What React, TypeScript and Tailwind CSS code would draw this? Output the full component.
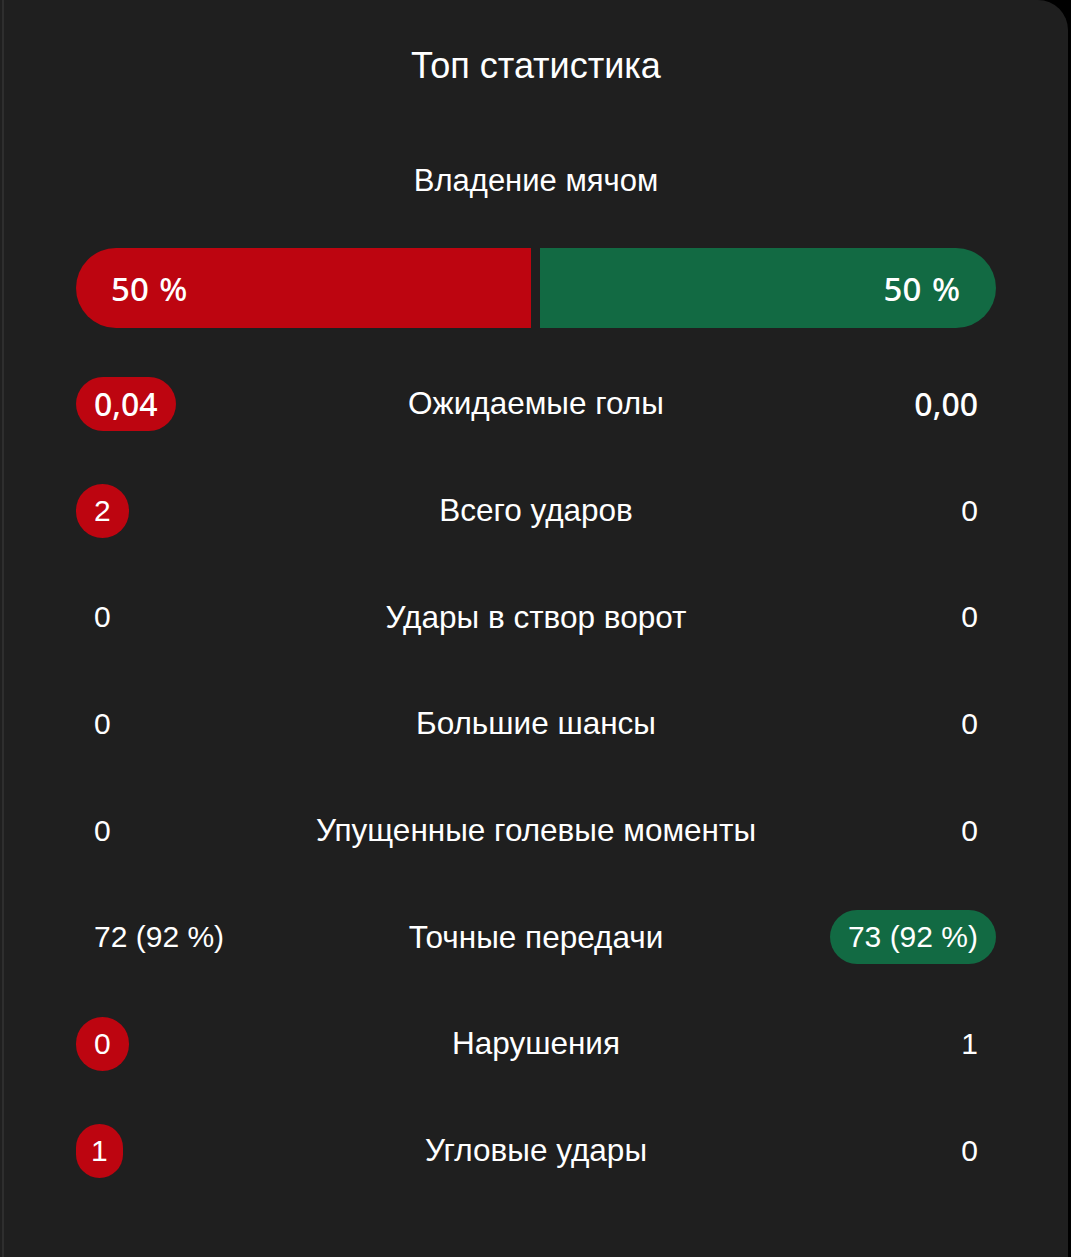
type Side = { value: string; tone?: "red" | "green"; pad?: string };

type Row = { label: string; left: Side; right: Side };

const rows: Row[] = [
  { label: "Ожидаемые голы", left: { value: "0,04", tone: "red" }, right: { value: "0,00" } },
  { label: "Всего ударов", left: { value: "2", tone: "red" }, right: { value: "0" } },
  { label: "Удары в створ ворот", left: { value: "0" }, right: { value: "0" } },
  { label: "Большие шансы", left: { value: "0" }, right: { value: "0" } },
  { label: "Упущенные голевые моменты", left: { value: "0" }, right: { value: "0" } },
  { label: "Точные передачи", left: { value: "72 (92 %)" }, right: { value: "73 (92 %)", tone: "green" } },
  { label: "Нарушения", left: { value: "0", tone: "red" }, right: { value: "1" } },
  { label: "Угловые удары", left: { value: "1", tone: "red", pad: "px-[15px]" }, right: { value: "0" } },
];

const arial = "font-['Liberation_Sans',Arial,sans-serif]";
const noto = "font-['Noto_Sans',sans-serif]";

function Value({ side, align }: { side: Side; align: "left" | "right" }) {
  const isNum = /^\d+,\d+$/.test(side.value);
  const bg =
    side.tone === "red" ? "bg-[#bd0510]" : side.tone === "green" ? "bg-[#126a43]" : "";
  return (
    <div className={`flex ${align === "left" ? "justify-start" : "justify-end"}`}>
      <span
        className={`flex h-[54px] items-center rounded-full ${side.pad ?? "px-[18px]"} ${bg} ${
          isNum ? `${noto} text-[32px] font-medium` : `${arial} text-[30px]`
        } leading-none text-white`}
      >
        {side.value}
      </span>
    </div>
  );
}

export default function App() {
  return (
    <div className="flex min-h-[1257px] bg-black">
      <div className="w-[2px] bg-[#1f1f1f]" />
      <div className="w-[1066px] rounded-tr-[30px] border-l-2 border-[#2e2e2e] bg-[#1f1f1f] px-[72px] pb-[80px] pt-[46px] text-white">
        <h2 className={`${arial} text-center text-[36px] leading-[40px] font-normal`}>
          Топ статистика
        </h2>
        <p className={`${arial} mt-[79px] text-center text-[31px] leading-[32px]`}>
          Владение мячом
        </p>

        <div className="mt-[51px] flex h-[80px] gap-[9px]">
          <div className="flex flex-1 items-center rounded-l-full bg-[#bd0510] pl-[35px]">
            <span className={`${noto} text-[33px] font-medium leading-none [word-spacing:2px]`}>50 %</span>
          </div>
          <div className="flex flex-1 items-center justify-end rounded-r-full bg-[#126a43] pr-[36px]">
            <span className={`${noto} text-[33px] font-medium leading-none [word-spacing:2px]`}>50 %</span>
          </div>
        </div>

        <div className="mt-[49px] flex flex-col gap-[52.7px]">
          {rows.map((row) => (
            <div key={row.label} className="grid grid-cols-[1fr_auto_1fr] items-center">
              <Value side={row.left} align="left" />
              <span className={`${arial} text-center text-[31.5px] leading-none`}>{row.label}</span>
              <Value side={row.right} align="right" />
            </div>
          ))}
        </div>
      </div>
    </div>
  );
}
